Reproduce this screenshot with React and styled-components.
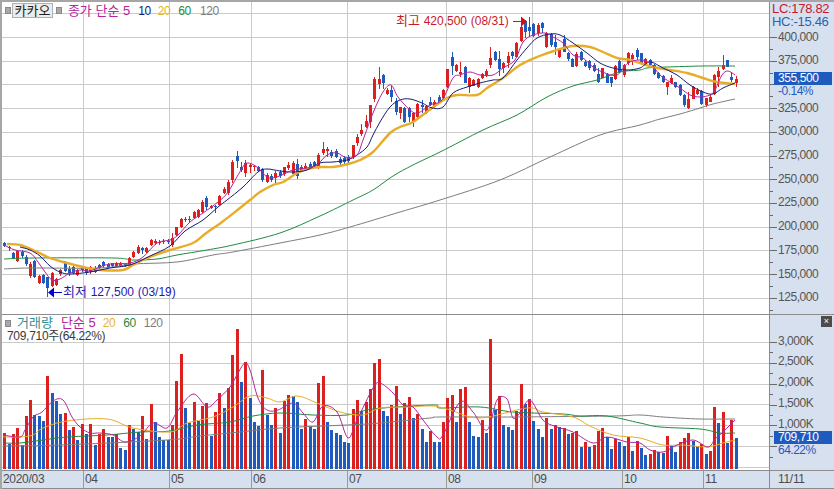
import styled, { createGlobalStyle } from "styled-components";

const PANEL = "#d6e0ef";
const LINE = "#8c8c8c";
const GRID = "#cbcbcb";
const RED = "#dc1f1f";
const BLUE = "#1f5bbd";
const FONT = `"Liberation Sans", "Noto Sans CJK KR", sans-serif`;

const MAGENTA = "#b5249c";
const NAVY = "#141c78";
const ORANGE = "#e8ac28";
const GREEN = "#1f8a42";
const GRAY = "#7d7d7d";

// [up, bodyTop, bodyBottom, high, low] in plot pixels
const candles = [
  [0,243,246,242,247],[0,247,248,246,251],[0,253,258,252,259],[1,251,261,250,262],[0,252,256,250,258],
  [0,257,264,255,266],[1,264,276,262,278],[0,261,277,260,278],[1,276,283,275,284],[0,275,283,274,284],
  [0,277,288,277,297],[1,273,286,272,287],[1,279,285,278,286],[1,270,274,269,276],[0,262,271,261,272],
  [0,269,273,266,276],[0,267,273,266,274],[1,270,275,269,276],[0,267,270,266,272],[0,268,273,267,275],
  [1,267,272,266,274],[0,268,272,266,273],[0,265,268,264,270],[0,262,266,261,268],[0,264,267,263,268],
  [0,263,266,263,267],[1,263,266,262,267],[1,263,266,262,267],[0,264,266,263,267],[1,258,265,257,266],
  [1,252,257,251,258],[1,247,253,245,254],[0,248,250,247,254],[1,248,252,247,253],[1,240,245,239,246],
  [1,241,243,239,245],[1,242,243,240,245],[0,241,242,239,244],[0,241,242,239,244],[1,238,245,233,247],
  [1,227,235,227,236],[1,219,227,218,228],[0,219,220,217,222],[0,219,220,216,222],[1,212,218,211,219],
  [1,210,217,209,218],[1,202,212,200,213],[0,198,207,196,210],[1,206,208,205,209],[0,206,207,205,213],
  [1,196,205,195,206],[1,189,193,187,194],[1,182,193,180,195],[1,162,180,160,183],[0,156,161,151,168],
  [0,167,170,162,172],[1,163,173,160,177],[1,165,167,163,173],[1,166,167,165,171],[0,167,171,166,172],
  [0,169,180,168,182],[1,175,182,173,183],[0,176,180,174,182],[1,173,178,171,183],[0,172,176,170,178],
  [1,167,174,167,176],[1,165,168,162,170],[1,163,174,161,176],[0,164,176,159,179],[1,167,171,165,172],
  [1,166,169,163,170],[0,164,167,162,169],[0,162,167,161,168],[1,155,168,153,169],[1,149,153,142,155],
  [1,149,151,147,157],[0,152,156,150,158],[0,151,157,149,158],[0,159,163,157,165],[0,158,162,156,164],
  [0,157,161,155,163],[1,145,157,145,159],[1,137,143,134,146],[1,130,134,124,136],[1,121,127,115,128],
  [1,105,122,105,128],[1,79,99,77,102],[1,79,84,67,89],[0,75,83,74,89],[1,90,94,88,95],
  [0,90,97,86,102],[0,101,112,98,115],[1,107,113,107,119],[0,108,122,107,123],[0,108,117,107,122],
  [1,113,122,112,127],[1,104,117,103,118],[0,105,107,100,113],[1,106,113,105,114],[0,102,105,97,106],
  [1,102,107,100,108],[0,97,102,95,103],[1,90,98,89,99],[1,69,87,69,88],[0,57,66,52,75],
  [1,65,71,64,72],[1,72,74,62,77],[0,67,83,66,83],[1,78,87,77,93],[1,80,86,79,86],
  [1,79,87,78,88],[1,74,78,73,79],[1,71,75,69,77],[1,58,65,47,68],[0,52,60,51,61],
  [0,59,69,51,76],[1,63,68,62,73],[1,56,63,52,68],[0,52,56,51,59],[1,43,57,42,57],
  [1,27,41,25,42],[0,21,32,20,38],[0,27,31,17,37],[0,24,36,23,37],[1,25,33,23,36],
  [0,23,28,22,33],[1,33,47,32,48],[0,34,45,33,47],[0,42,47,35,55],[1,49,57,48,58],
  [0,39,52,35,52],[0,53,59,52,61],[0,59,67,58,67],[1,54,66,52,67],[0,52,60,51,61],
  [0,62,66,60,67],[0,61,68,60,70],[0,65,71,63,72],[0,74,82,68,83],[1,68,78,68,78],
  [0,74,83,73,83],[0,77,83,77,87],[1,66,79,65,80],[0,61,72,60,73],[1,65,75,64,77],
  [1,53,63,52,65],[1,55,59,53,65],[0,50,57,48,60],[0,53,63,53,64],[1,59,65,58,66],
  [0,60,65,59,67],[0,65,74,64,75],[0,73,78,72,79],[0,76,82,75,83],[1,82,87,82,95],
  [1,78,83,75,84],[0,82,87,82,88],[0,85,95,84,96],[0,95,105,94,107],[1,99,108,92,109],
  [1,87,99,86,99],[1,90,94,88,95],[0,91,104,90,105],[1,98,105,98,107],[1,97,102,94,102],
  [1,75,94,74,95],[1,71,77,67,87],[1,65,69,55,70],[0,60,67,60,67],[0,77,80,72,82],
  [1,79,83,76,87],
];

// [up, top] of every volume bar; the bars all stand on y = 469
const volumes = [
  [1,433],[0,444],[1,434],[1,428],[0,445],[1,416],[1,400],[0,415],[0,416],[0,421],
  [1,376],[0,393],[0,401],[0,414],[1,413],[0,430],[1,427],[0,440],[1,424],[0,434],
  [1,424],[0,445],[1,434],[1,429],[0,437],[0,437],[1,434],[0,448],[0,450],[1,425],
  [0,429],[0,432],[1,416],[0,439],[1,404],[0,422],[0,437],[0,440],[0,440],[1,425],
  [1,381],[1,354],[0,408],[0,423],[1,402],[0,421],[1,406],[1,403],[0,436],[1,412],
  [1,393],[0,408],[1,388],[1,355],[1,329],[0,382],[1,362],[0,398],[0,422],[0,426],
  [1,370],[0,415],[0,425],[1,408],[0,433],[1,401],[1,395],[0,396],[0,402],[0,429],
  [1,419],[0,426],[0,429],[1,383],[1,376],[0,422],[0,430],[0,433],[0,435],[0,442],
  [0,443],[1,409],[1,400],[0,411],[1,402],[1,389],[1,363],[1,359],[0,411],[0,416],
  [1,405],[1,386],[0,414],[1,403],[1,397],[0,418],[1,414],[0,429],[0,442],[1,431],
  [0,442],[0,442],[1,422],[1,398],[1,395],[0,422],[1,389],[1,387],[0,422],[0,436],
  [0,437],[1,420],[0,433],[1,339],[0,410],[1,396],[0,425],[0,427],[0,430],[1,411],
  [1,384],[0,404],[1,399],[0,421],[0,429],[0,437],[1,418],[0,429],[1,425],[0,427],
  [1,428],[0,434],[1,433],[1,431],[0,447],[1,442],[0,447],[1,445],[1,431],[1,428],
  [0,437],[0,449],[1,439],[0,442],[0,446],[1,437],[0,451],[1,441],[0,448],[0,455],
  [1,454],[1,450],[0,452],[0,453],[1,436],[0,446],[0,452],[1,442],[1,438],[1,433],
  [0,441],[0,446],[1,444],[0,454],[1,451],[1,407],[0,423],[1,412],[0,443],[1,420],
  [0,438],
];

const priceLines = [
  { color: GRAY, width: 1, points: [[4,269],[30,268],[100,268],[133,264],[177,262],[213,255],[233,252],[280,243],[320,235],[350,227],[400,212],[440,200],[500,180],[550,157],[600,135],[640,125],[660,119],[680,114],[700,108],[713,104],[735,99]] },
  { color: GREEN, width: 1, points: [[4,259],[33,258],[113,258],[133,260],[157,259],[177,255],[207,250],[233,245],[280,233],[320,216],[353,200],[373,190],[393,176],[413,165],[440,152],[483,130],[517,115],[547,97],[573,86],[597,80],[620,72],[640,70],[647,68],[667,67],[703,66],[735,66]] },
  { color: ORANGE, width: 2.4, points: [[7,244],[20,245],[33,250],[50,258],[67,263],[83,267],[100,270],[123,270],[133,265],[150,257],[170,250],[193,243],[205,234],[222,222],[235,212],[250,200],[260,192],[273,185],[283,182],[297,173],[307,169],[320,167],[333,167],[348,164],[360,160],[373,152],[390,133],[400,127],[413,122],[432,108],[447,98],[457,95],[477,95],[487,88],[503,78],[520,65],[537,57],[557,50],[573,46],[590,47],[603,52],[617,58],[630,60],[640,63],[653,67],[670,70],[687,73],[703,78],[717,82],[735,84]] },
  { color: NAVY, width: 1, points: [[20,247],[30,250],[40,256],[50,266],[60,272],[70,274],[90,272],[110,268],[130,265],[150,256],[170,246],[185,231],[203,220],[218,207],[227,200],[243,187],[258,172],[267,169],[280,171],[293,172],[307,170],[320,163],[333,162],[347,160],[357,155],[367,147],[373,135],[380,122],[390,107],[400,100],[410,99],[422,103],[432,108],[443,107],[453,93],[467,87],[480,83],[493,80],[503,78],[517,60],[527,48],[537,38],[550,34],[560,35],[573,43],[587,53],[600,63],[613,68],[627,70],[640,68],[650,62],[663,68],[677,75],[690,85],[703,92],[713,94],[723,88],[735,83]] },
  { color: MAGENTA, width: 1, points: [[4,245],[15,250],[30,253],[38,262],[45,272],[52,280],[60,279],[70,273],[80,270],[90,271],[100,267],[110,264],[130,263],[143,257],[157,243],[170,240],[178,235],[190,222],[203,213],[218,202],[228,192],[241,170],[247,163],[257,167],[267,177],[277,177],[293,170],[307,168],[317,165],[327,155],[337,153],[347,158],[357,155],[363,140],[373,113],[383,92],[391,85],[398,97],[410,110],[418,113],[430,105],[442,100],[453,78],[460,75],[470,72],[480,75],[493,75],[503,68],[515,60],[523,42],[533,35],[545,33],[553,37],[563,43],[573,55],[583,58],[593,67],[605,73],[617,75],[628,63],[640,60],[650,63],[660,75],[670,82],[680,88],[690,95],[700,97],[710,95],[715,90],[722,75],[728,71],[735,75]] },
];

const volumeLines = [
  { color: GRAY, width: 1, points: [[3,446],[60,445],[167,440],[200,436],[240,432],[280,428],[347,425],[380,423],[430,418],[440,417],[513,417],[613,416],[640,415],[663,417],[700,419],[735,419]] },
  { color: GREEN, width: 1, points: [[3,443],[20,443],[43,440],[67,437],[107,435],[140,432],[170,431],[197,425],[230,422],[253,416],[280,413],[313,415],[347,415],[373,409],[433,405],[440,408],[480,407],[513,412],[563,414],[580,416],[607,416],[640,423],[660,427],[700,429],[720,433],[735,433]] },
  { color: ORANGE, width: 1, points: [[3,437],[20,437],[33,435],[43,428],[67,421],[107,419],[133,428],[170,432],[187,423],[213,417],[233,407],[250,396],[267,398],[280,402],[297,396],[317,403],[340,412],[363,415],[380,408],[407,407],[433,406],[450,410],[480,418],[527,408],[543,412],[573,417],[590,426],[613,435],[640,438],[663,445],[683,445],[707,447],[723,443],[735,440]] },
  { color: MAGENTA, width: 1, points: [[3,435],[20,437],[25,430],[33,417],[42,412],[53,401],[63,400],[72,417],[80,427],[90,433],[100,433],[113,435],[125,442],[140,436],[153,423],[167,428],[177,412],[193,394],[207,407],[217,400],[230,387],[238,373],[245,363],[250,370],[258,398],[267,410],[278,410],[293,403],[303,413],[313,422],[323,406],[337,412],[348,438],[357,420],[373,388],[380,383],[393,393],[403,405],[413,407],[423,420],[437,437],[443,435],[460,402],[473,412],[487,430],[497,400],[507,399],[513,418],[520,413],[530,400],[543,420],[557,427],[573,432],[593,443],[607,437],[627,442],[640,443],[650,450],[663,452],[677,445],[693,440],[708,447],[715,439],[722,433],[730,425],[735,420]] },
];

const MONTHS = [83, 169, 251, 347, 446, 532, 622, 703];
const MONTH_LABELS = ["2020/03", "04", "05", "06", "07", "08", "09", "10", "11"];

const barX = (i) => Math.round(4.3 + 4.302 * i);
const priceY = (k) => 37 + ((400 - k) / 25) * 23.7;
const volumeY = (k) => 467 - (k / 500) * 20.83;

const priceTicks = [];
for (let k = 400; k >= 125; k -= 25) priceTicks.push(k);
const volumeTicks = [3000, 2500, 2000, 1500, 1000];

const smoothPath = (pts) => {
  let d = `M${pts[0][0]} ${pts[0][1]}`;
  for (let i = 0; i < pts.length - 1; i++) {
    const a = pts[i - 1] || pts[i];
    const b = pts[i];
    const c = pts[i + 1];
    const e = pts[i + 2] || c;
    const c1 = [b[0] + (c[0] - a[0]) / 6, b[1] + (c[1] - a[1]) / 6];
    const c2 = [c[0] - (e[0] - b[0]) / 6, c[1] - (e[1] - b[1]) / 6];
    d += ` C${c1[0].toFixed(1)} ${c1[1].toFixed(1)} ${c2[0].toFixed(1)} ${c2[1].toFixed(1)} ${c[0]} ${c[1]}`;
  }
  return d;
};

const GlobalStyle = createGlobalStyle`
  html, body {
    margin: 0;
    padding: 0;
    background: #ffffff;
  }
`;

const Frame = styled.div`
  width: 834px;
  height: 489px;
  box-sizing: border-box;
  display: grid;
  grid-template-columns: 767px 65px;
  grid-template-rows: 313px 156px 18px;
  border-top: 2px solid #a6a6a6;
  border-left: 2px solid #a6a6a6;
  background: #ffffff;
  font-family: ${FONT};
  overflow: hidden;
`;

const Plot = styled.div`
  position: relative;
  border-bottom: 1px solid ${LINE};
`;

const Axis = styled.div`
  position: relative;
  background: ${PANEL};
  border-left: 1px solid ${LINE};
  border-bottom: 1px solid ${LINE};
`;

const Drawing = styled.svg`
  display: block;
`;

const Legend = styled.div`
  position: absolute;
  left: 3px;
  top: 1px;
  display: flex;
  align-items: center;
  font-size: 13px;
  line-height: 14px;
  white-space: nowrap;
`;

const Handle = styled.span`
  width: 4px;
  height: 5px;
  background: #a8a8a8;
  border: 1px solid #8a8a8a;
  margin-right: ${(p) => p.$gap}px;
`;

const NameButton = styled.span`
  height: 13px;
  line-height: 13px;
  padding: 0 1.5px;
  background: #ececec;
  border: 1px solid #b0b0b0;
  color: #222222;
  margin-right: 3px;
`;

const LegendItem = styled.span`
  color: ${(p) => p.$color};
  margin-right: ${(p) => p.$gap}px;
  font-size: ${(p) => (p.$num ? "12px" : "13px")};
  letter-spacing: ${(p) => (p.$num ? "-0.4px" : "0")};
`;

const VolumeNote = styled.div`
  position: absolute;
  left: 5px;
  top: 14px;
  font-size: 12px;
  line-height: 14px;
  letter-spacing: -0.3px;
  color: #3a3a3a;
  white-space: nowrap;
`;

const Indicators = styled.div`
  position: absolute;
  left: 2px;
  top: 0;
  font-size: 13px;
  line-height: 13px;
  letter-spacing: -0.3px;
  white-space: nowrap;
`;

const Indicator = styled.div`
  color: ${(p) => p.$color};
`;

const Badge = styled.div`
  position: absolute;
  left: 4px;
  top: ${(p) => p.$top}px;
  width: 58px;
  height: 13px;
  padding-left: 4px;
  box-sizing: border-box;
  background: ${BLUE};
  color: #ffffff;
  font-size: 12px;
  line-height: 13px;
  letter-spacing: -0.4px;
`;

const Change = styled.div`
  position: absolute;
  left: 8px;
  top: ${(p) => p.$top}px;
  color: ${BLUE};
  font-size: 12px;
  line-height: 13px;
  letter-spacing: -0.5px;
`;

const CloseButton = styled.button`
  position: absolute;
  right: 2px;
  top: 1px;
  width: 11px;
  height: 11px;
  padding: 0;
  border: none;
  background: #4c4c4c;
  color: #ffffff;
  font-family: ${FONT};
  font-size: 9px;
  line-height: 11px;
`;

const DateAxis = styled.div`
  position: relative;
  background: ${PANEL};
  border-bottom: 1px solid ${LINE};
  font-size: 12px;
  line-height: 17px;
  letter-spacing: -0.3px;
  color: #4c4c4c;
`;

const DateAxisRow = styled.div`
  display: grid;
  height: 100%;
  grid-template-columns: 81px 86px 82px 96px 99px 86px 90px 81px 1fr;
`;

const DateCell = styled.div`
  padding-left: 1px;
  border-left: ${(p) => (p.$first ? "none" : "1px solid #9a9a9a")};
`;

const DateEnd = styled.div`
  background: ${PANEL};
  border-left: 1px solid ${LINE};
  border-bottom: 1px solid ${LINE};
  font-size: 12px;
  line-height: 17px;
  letter-spacing: -0.3px;
  color: #4c4c4c;
  padding-left: 8px;
`;

const TickLabel = styled.text`
  font-family: ${FONT};
  font-size: 12px;
  letter-spacing: -0.45px;
  fill: #555555;
`;

const Annotation = styled.text`
  font-family: ${FONT};
  font-size: 12px;
  word-spacing: 0.4px;
  fill: ${(p) => p.$color};
`;

const AnnotationWord = styled.tspan`
  font-size: 13px;
`;

const Grid = ({ rows, top, bottom }) => (
  <g stroke={GRID} strokeWidth="1" shapeRendering="crispEdges">
    {rows.map((y) => (
      <line key={y} x1="2" x2="769" y1={y} y2={y} />
    ))}
    {MONTHS.map((x) => (
      <line key={x} x1={x} x2={x} y1={top} y2={bottom} />
    ))}
  </g>
);

const AverageLines = ({ lines }) => (
  <g fill="none" strokeLinejoin="round">
    {lines.map((l) => (
      <path key={l.color} d={smoothPath(l.points)} stroke={l.color} strokeWidth={l.width} />
    ))}
  </g>
);

const PriceChart = () => (
  <Drawing width="767" height="312" viewBox="2 2 767 312">
    <Grid rows={[13, ...priceTicks.map(priceY).map(Math.round)]} top={2} bottom={314} />
    <g shapeRendering="crispEdges">
      {candles.map(([up, top, bottom, high, low], i) => {
        const x = barX(i);
        const color = up ? RED : BLUE;
        return (
          <g key={i} fill={color}>
            <rect x={x} y={high} width="1" height={low - high} />
            <rect x={x - 1} y={top} width="3" height={Math.max(bottom - top, 1)} />
          </g>
        );
      })}
    </g>
    <AverageLines lines={priceLines} />
    <Annotation x="396" y="25" $color="#c8192c"><AnnotationWord>최고</AnnotationWord> 420,500 (08/31)</Annotation>
    <path d="M513 21.5H522" stroke="#c8192c" strokeWidth="1" />
    <path d="M521 16.5L527 21.5L521 26.5Z" fill="#d01010" />
    <Annotation x="63" y="296" $color="#1c1cb0"><AnnotationWord>최저</AnnotationWord> 127,500 (03/19)</Annotation>
    <path d="M52 292.5H62" stroke="#0000c8" strokeWidth="1" />
    <path d="M54 287.5L48 292.5L54 297.5Z" fill="#0000c8" />
  </Drawing>
);

const VolumeChart = () => (
  <Drawing width="767" height="155" viewBox="2 315 767 155">
    <Grid rows={[342, 363, 384, 404, 425, 446, 467]} top={315} bottom={470} />
    <g shapeRendering="crispEdges">
      {volumes.map(([up, top], i) => (
        <rect key={i} x={barX(i) - 1} y={top} width="3" height={469 - top} fill={up ? RED : BLUE} />
      ))}
    </g>
    <AverageLines lines={volumeLines} />
  </Drawing>
);

const PriceAxis = () => (
  <Drawing width="64" height="312" viewBox="770 2 64 312">
    <g stroke="#6a6a6a" shapeRendering="crispEdges">
      {priceTicks.map((k) => (
        <g key={k}>
          <line x1="770" x2="777" y1={Math.round(priceY(k))} y2={Math.round(priceY(k))} />
          <line x1="770" x2="773" y1={Math.round(priceY(k - 12.5))} y2={Math.round(priceY(k - 12.5))} />
        </g>
      ))}
    </g>
    {/* 350,000 sits under the current price badge */}
    {priceTicks.filter((k) => k !== 350).map((k) => (
      <TickLabel key={k} x="778" y={priceY(k) + 3.5}>
        {k},000
      </TickLabel>
    ))}
  </Drawing>
);

const VolumeAxis = () => (
  <Drawing width="64" height="155" viewBox="770 315 64 155">
    <g stroke="#6a6a6a" shapeRendering="crispEdges">
      {[3000, 2500, 2000, 1500, 1000, 500].map((k) => (
        <g key={k}>
          <line x1="770" x2="777" y1={Math.round(volumeY(k))} y2={Math.round(volumeY(k))} />
          <line x1="770" x2="773" y1={Math.round(volumeY(k - 250))} y2={Math.round(volumeY(k - 250))} />
        </g>
      ))}
    </g>
    {volumeTicks.map((k) => (
      <TickLabel key={k} x="778" y={volumeY(k) + 2.5}>
        {k.toLocaleString("en-US")}K
      </TickLabel>
    ))}
  </Drawing>
);

const App = () => (
  <>
    <GlobalStyle />
    <Frame>
      <Plot>
        <PriceChart />
        <Legend>
          <Handle $gap={1} />
          <NameButton>카카오</NameButton>
          <Handle $gap={6} />
          <LegendItem $color={MAGENTA} $gap={8}>종가 단순 5</LegendItem>
          <LegendItem $color={NAVY} $gap={7} $num>10</LegendItem>
          <LegendItem $color="#e3b62c" $gap={8} $num>20</LegendItem>
          <LegendItem $color={GREEN} $gap={9} $num>60</LegendItem>
          <LegendItem $color={GRAY} $gap={0} $num>120</LegendItem>
        </Legend>
      </Plot>
      <Axis>
        <PriceAxis />
        <Indicators>
          <Indicator $color="#c8192c">LC:178.82</Indicator>
          <Indicator $color="#2a62b0">HC:-15.46</Indicator>
        </Indicators>
        <Badge $top={70}>355,500</Badge>
        <Change $top={83}>-0.14%</Change>
      </Axis>
      <Plot>
        <VolumeChart />
        <Legend>
          <Handle $gap={6} />
          <LegendItem $color="#2f8f96" $gap={8}>거래량</LegendItem>
          <LegendItem $color={MAGENTA} $gap={7}>단순 5</LegendItem>
          <LegendItem $color="#e8b433" $gap={8} $num>20</LegendItem>
          <LegendItem $color={GREEN} $gap={8} $num>60</LegendItem>
          <LegendItem $color={GRAY} $gap={0} $num>120</LegendItem>
        </Legend>
        <VolumeNote>709,710주(64.22%)</VolumeNote>
      </Plot>
      <Axis>
        <VolumeAxis />
        <CloseButton>×</CloseButton>
        <Badge $top={116}>709,710</Badge>
        <Change $top={129}>64.22%</Change>
      </Axis>
      <DateAxis>
        <DateAxisRow>
          {MONTH_LABELS.map((m, i) => (
            <DateCell key={m} $first={i === 0}>{m}</DateCell>
          ))}
        </DateAxisRow>
      </DateAxis>
      <DateEnd>11/11</DateEnd>
    </Frame>
  </>
);

export default App;
